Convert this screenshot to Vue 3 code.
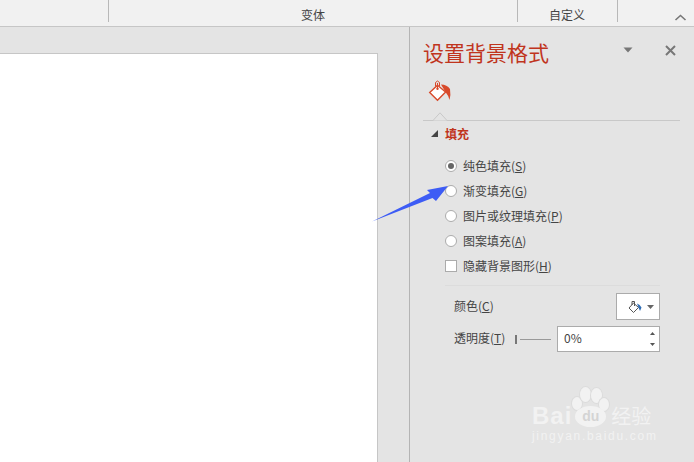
<script setup>
const fills = [
  { label: '纯色填充(', key: 'S', on: true },
  { label: '渐变填充(', key: 'G', on: false },
  { label: '图片或纹理填充(', key: 'P', on: false },
  { label: '图案填充(', key: 'A', on: false },
]
</script>

<template>
  <div class="app">
    <header class="ribbon">
      <div class="group g1"></div>
      <div class="group g2"><span>变体</span></div>
      <div class="group g3"><span>自定义</span></div>
      <div class="group g4">
        <svg width="13" height="7" viewBox="0 0 13 7"><path d="M1.5 6 6.5 1.5 11.5 6" fill="none" stroke="#777" stroke-width="1.6"/></svg>
      </div>
    </header>
    <div class="main">
      <div class="canvas">
        <div class="slide"></div>
      </div>
      <aside class="panel">
        <div class="title-row">
          <h1>设置背景格式</h1>
          <svg class="menu" width="10" height="6" viewBox="0 0 10 6"><path d="M0.5 0.5h9L5 5.5z" fill="#777"/></svg>
          <svg class="close" width="11" height="11" viewBox="0 0 11 11"><path d="M1 1 10 10M10 1 1 10" stroke="#777" stroke-width="2"/></svg>
        </div>
        <div class="tab-icon">
          <svg width="26" height="26" viewBox="0 0 26 26">
            <path d="M9.500 6.200 17.600 13 9.500 21.200 1.700 13.400z" fill="#fff" stroke="#d8492a" stroke-width="1.400"/>
            <path d="M7.500 7.500V3.500Q9.500 0.500 11.500 3.500V7" fill="none" stroke="#d8492a" stroke-width="1"/>
            <path d="M9.500 4V9" stroke="#d8492a" stroke-width="1"/>
            <circle cx="9.500" cy="9.800" r="1.200" fill="#d8492a"/>
            <path d="M13 5.500Q19 5.500 22 10 23 16 21.500 21 20.500 16.500 17.500 13z" fill="#d8492a"/>
          </svg>
        </div>
        <div class="tab-rule">
          <svg class="notch" width="14" height="9" viewBox="0 0 14 9"><path d="M0 8.500 7 0.800 14 8.500" fill="#e4e4e4" stroke="#c8c8c8"/></svg>
        </div>
        <div class="section-head">
          <svg width="7" height="7" viewBox="0 0 7 7"><path d="M7 0V7H0z" fill="#444"/></svg>
          <span>填充</span>
        </div>
        <ul class="options">
          <li v-for="f in fills" :key="f.key" class="option">
            <span class="radio" :class="{ on: f.on }"></span>
            <span>{{ f.label }}<u>{{ f.key }}</u>)</span>
          </li>
          <li class="option check-row">
            <span class="check"></span>
            <span>隐藏背景图形(<u>H</u>)</span>
          </li>
        </ul>
        <div class="divider"></div>
        <div class="field color-field">
          <span class="lift">颜色(<u>C</u>)</span>
          <div class="color-btn">
            <svg width="14" height="14" viewBox="0 0 14 14">
              <path d="M5.500 3 10.500 7.500 5.500 12.500 1 8z" fill="#fff" stroke="#555"/>
              <path d="M4 5V1.500H6.500V6" fill="none" stroke="#555"/>
              <path d="M9 3.500Q12 4.500 13.500 7.500L12 11 10.500 7.500z" fill="#2f6db5"/>
            </svg>
            <svg width="7" height="4" viewBox="0 0 7 4"><path d="M0 0h7L3.500 4z" fill="#666"/></svg>
          </div>
        </div>
        <div class="field alpha-field">
          <span class="alpha-label">透明度(<u>T</u>)</span>
          <div class="slider"><i class="thumb"></i><i class="track"></i></div>
          <div class="spin">
            <span class="pct">0%</span>
            <div class="arrows">
              <svg width="5" height="3" viewBox="0 0 5 3"><path d="M2.500 0 5 3H0z" fill="#555"/></svg>
              <svg width="5" height="3" viewBox="0 0 5 3"><path d="M0 0h5L2.500 3z" fill="#555"/></svg>
            </div>
          </div>
        </div>
      </aside>
    </div>
    <svg class="arrow" width="77" height="38" viewBox="0 0 77 38">
      <path d="M0 37.500 L58 9 L55 6 L76 2 L64 17 L60.500 14z" fill="#3d5cf5"/>
    </svg>
    <div class="mark">
      <div class="mark-top">
        <span class="bai">Bai</span>
        <span class="paw">
          <i class="t1"></i><i class="t2"></i><i class="t3"></i><i class="t4"></i>
          <b>du</b>
        </span>
        <span class="jy">经验</span>
      </div>
      <div class="mark-url">jingyan.baidu.com</div>
    </div>
  </div>
</template>

<style>
html, body { margin: 0; overflow: hidden; }
</style>

<style scoped>
.app {
  position: relative;
  width: 694px;
  height: 462px;
  overflow: hidden;
  background: #e4e4e4;
  color: #444;
  font: 12px "Noto Sans CJK SC", "Liberation Sans", sans-serif;
}
.ribbon {
  display: flex;
  height: 26px;
  box-sizing: content-box;
  background: #f1f1f1;
  border-bottom: 1px solid #c6c6c6;
}
.group {
  display: flex;
  height: 22px;
  box-sizing: border-box;
  align-items: flex-end;
  justify-content: center;
  border-right: 1px solid #b8b8b8;
  font-size: 12px;
  line-height: 16px;
}
.group span { position: relative; top: 1px; }
.g1 { width: 109px; }
.g2 { width: 409px; }
.g3 { width: 100px; padding-right: 1px; }
.g4 { flex: 1; border: 0; height: 26px; align-items: flex-start; justify-content: flex-end; padding: 14px 7px 0 0; }
.main { display: flex; height: 435px; }
.canvas { width: 409px; padding-top: 26px; box-sizing: border-box; }
.slide {
  width: 378px;
  height: 409px;
  box-sizing: border-box;
  background: #fff;
  border: solid #c6c6c6;
  border-width: 1px 1px 0 0;
}
.panel {
  flex: 1;
  border-left: 1px solid #b4b4b4;
  padding: 0 14px 0 13px;
  min-width: 0;
}
.title-row { display: flex; align-items: center; height: 54px; box-sizing: border-box; }
h1 {
  margin: -3px 0 0;
  flex: 1;
  font-size: 21px;
  line-height: 51px;
  font-weight: 400;
  color: #c0341d;
}
.menu { margin-right: 32px; margin-top: -8px; }
.close { margin-right: 4px; margin-top: -7px; }
.tab-icon { height: 26px; margin: -2px 0 0 5px; }
.tab-rule { position: relative; margin-top: 15px; height: 1px; width: 257px; background: #c8c8c8; }
.notch { position: absolute; left: 10px; top: -8px; }
.section-head {
  display: flex;
  align-items: center;
  gap: 7px;
  height: 24px;
  padding-left: 8px;
  color: #c0341d;
  font-size: 12px;
  font-weight: 700;
}
.options { list-style: none; margin: 8px 0 0; padding: 0 0 0 22px; }
.option { display: flex; align-items: center; gap: 6px; height: 25px; font-size: 12px; color: #444; }
.radio {
  width: 12px;
  height: 12px;
  box-sizing: border-box;
  border: 1px solid #ababab;
  border-radius: 50%;
  background: #fff;
  position: relative;
}
.radio.on::after {
  content: "";
  position: absolute;
  inset: 2px;
  border-radius: 50%;
  background: #666;
}
.check { width: 12px; height: 12px; box-sizing: border-box; border: 1px solid #ababab; background: #fff; }
.divider { height: 1px; margin: 7px 0 0 22px; width: 215px; background: #dcdcdc; }
.field { display: flex; align-items: center; padding-left: 31px; box-sizing: border-box; }
.color-field { justify-content: space-between; margin-top: 7px; height: 27px; width: 237px; }
.lift { margin-top: -2px; }
.color-btn {
  display: flex;
  align-items: center;
  justify-content: flex-end;
  gap: 5px;
  width: 44px;
  height: 27px;
  box-sizing: border-box;
  padding-right: 5px;
  border: 1px solid #ababab;
  background: #fff;
}
.alpha-field { margin-top: 6px; height: 26px; }
.alpha-label { width: 61px; white-space: nowrap; margin-top: -4px; }
.slider { display: flex; align-items: center; width: 42px; }
.thumb { width: 2px; height: 9px; background: #777; margin-right: 3px; }
.track { flex: 1; height: 1px; background: #999; margin-right: 6px; }
.spin {
  display: flex;
  align-items: center;
  justify-content: space-between;
  width: 103px;
  height: 26px;
  box-sizing: border-box;
  padding: 0 4px 0 6px;
  border: 1px solid #ababab;
  background: #fff;
}
.pct { font-size: 12px; color: #444; margin-top: -4px; }
.arrows { display: flex; flex-direction: column; gap: 8px; }
.arrow { position: absolute; left: 372px; top: 184px; }
.mark { position: absolute; left: 532px; top: 386px; color: #f2f2f2; }
.mark-top { display: flex; align-items: flex-end; height: 42px; }
.bai { font: 700 24px/24px "Liberation Sans", sans-serif; letter-spacing: 1px; }
.paw { position: relative; width: 37px; height: 42px; }
.paw b {
  position: absolute;
  left: 3px;
  bottom: 1px;
  width: 31px;
  height: 21px;
  border-radius: 50%;
  background: #f2f2f2;
  color: #d4d4d4;
  font: 700 14px/20px "Liberation Sans", sans-serif;
  text-align: center;
}
.paw i { position: absolute; background: #f2f2f2; border-radius: 50%; box-shadow: 0 0 0 1px #dcdcdc; }
.t1 { left: 0; top: 11px; width: 10px; height: 13px; }
.t2 { left: 8px; top: 1px; width: 11px; height: 15px; }
.t3 { left: 19px; top: 2px; width: 11px; height: 15px; }
.t4 { left: 27px; top: 12px; width: 10px; height: 13px; }
.jy { font-size: 20px; line-height: 24px; margin-left: 2px; }
.mark-url { font: 12px/14px "Liberation Sans", sans-serif; letter-spacing: 1.7px; margin-top: 1px; }
</style>
